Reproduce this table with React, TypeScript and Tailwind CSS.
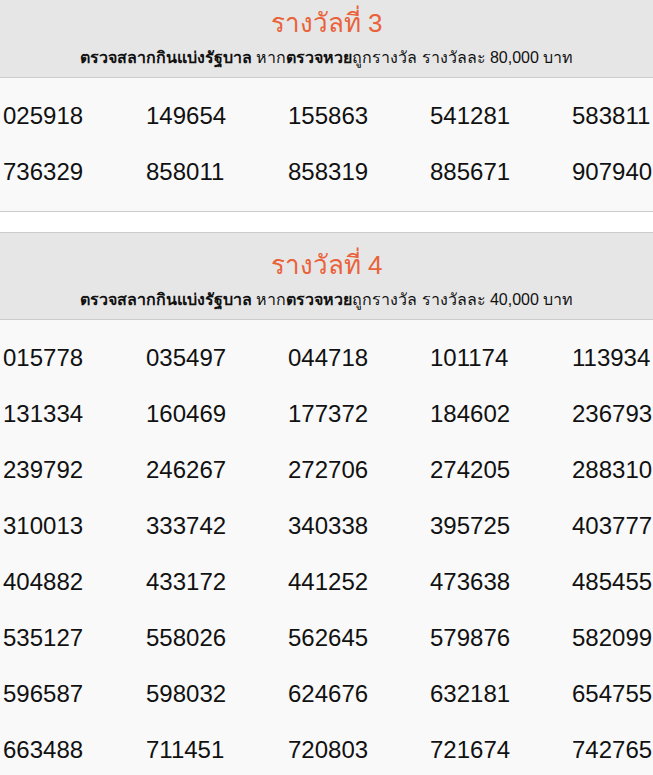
const prize3 = [
  "025918", "149654", "155863", "541281", "583811",
  "736329", "858011", "858319", "885671", "907940",
];

const prize4 = [
  "015778", "035497", "044718", "101174", "113934",
  "131334", "160469", "177372", "184602", "236793",
  "239792", "246267", "272706", "274205", "288310",
  "310013", "333742", "340338", "395725", "403777",
  "404882", "433172", "441252", "473638", "485455",
  "535127", "558026", "562645", "579876", "582099",
  "596587", "598032", "624676", "632181", "654755",
  "663488", "711451", "720803", "721674", "742765",
];

function PrizeSection({ title, amount, numbers }: { title: string; amount: string; numbers: string[] }) {
  return (
    <section className="mb-5">
      <div className="h-[88px] bg-[#e6e6e6] border-y border-[#cccccc] flex flex-col items-center pt-[14px]">
        <h2 className="text-[26px] leading-[36px] text-[#e9623a]">{title}</h2>
        <p className="text-[16px] leading-[20px] mt-[7px] text-[#111]">
          <b>ตรวจสลากกินแบ่งรัฐบาล</b> หาก<b>ตรวจหวย</b>ถูกรางวัล รางวัลละ {amount} บาท
        </p>
      </div>
      <div className="bg-[#f9f9f9] border-b border-[#cccccc] pt-[10px] pb-[11px] pl-[3px] grid grid-cols-[143px_142px_142px_142px_1fr]">
        {numbers.map((n, i) => (
          <div key={i} className="h-[56px] flex items-center text-[24px] text-[#111] font-['Liberation_Sans',Arial,sans-serif]">
            {n}
          </div>
        ))}
      </div>
    </section>
  );
}

export default function App() {
  return (
    <div className="w-[653px] h-[775px] overflow-hidden bg-white font-['Tahoma','Liberation_Sans','Noto_Sans',sans-serif]">
      <div className="-mt-[10px]">
        <PrizeSection title="รางวัลที่ 3" amount="80,000" numbers={prize3} />
        <PrizeSection title="รางวัลที่ 4" amount="40,000" numbers={prize4} />
      </div>
    </div>
  );
}
